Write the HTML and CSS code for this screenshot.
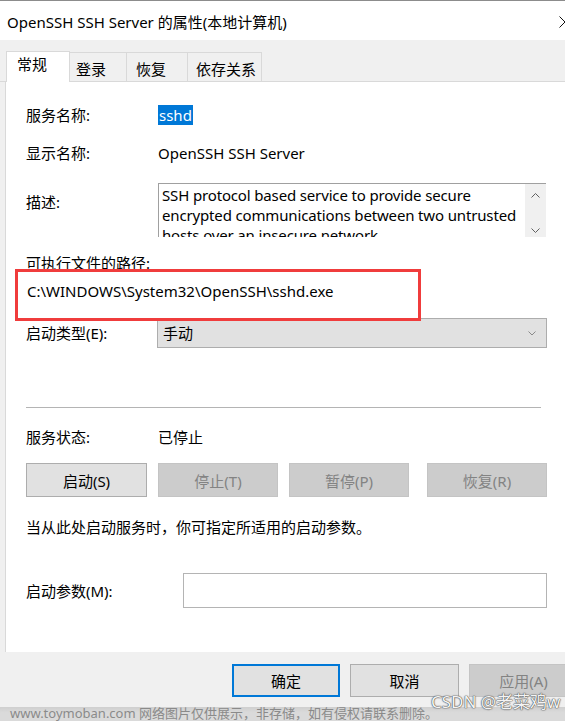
FILE: index.html
```html
<!DOCTYPE html>
<html lang="zh-CN">
<head>
<meta charset="UTF-8" />
<title>OpenSSH SSH Server 的属性(本地计算机)</title>
<link rel="stylesheet" href="styles.css">
</head>
<body>
<div class="window">

  <div class="titlebar">
    <span class="title">OpenSSH SSH Server 的属性(本地计算机)</span>
    <svg class="close" width="12" height="12" viewBox="0 0 12 12"><path d="M0.5 0.5 L11.5 11.5 M11.5 0.5 L0.5 11.5" stroke="#111" stroke-width="1" fill="none"/></svg>
  </div>

  <div class="tabs">
    <div class="tab active">常规</div>
    <div class="tab t-logon">登录</div>
    <div class="tab t-recover">恢复</div>
    <div class="tab t-deps">依存关系</div>
  </div>

  <div class="panel">
    <div class="row r-name">
      <span class="label">服务名称:</span>
      <span><span class="selected">sshd</span></span>
    </div>
    <div class="row r-display">
      <span class="label">显示名称:</span>
      <span>OpenSSH SSH Server</span>
    </div>
    <div class="row r-desc">
      <span class="label">描述:</span>
      <div class="textbox">
        <div class="textbox-text">
          <div>SSH protocol based service to provide secure</div>
          <div>encrypted communications between two untrusted</div>
          <div>hosts over an insecure network.</div>
        </div>
        <div class="scrollbar">
          <svg width="9" height="5" viewBox="0 0 9 5"><path d="M0.5 4.5 L4.5 0.5 L8.5 4.5" stroke="#606060" fill="none"/></svg>
          <svg width="9" height="5" viewBox="0 0 9 5"><path d="M0.5 0.5 L4.5 4.5 L8.5 0.5" stroke="#606060" fill="none"/></svg>
        </div>
      </div>
    </div>
    <div class="path-label">可执行文件的路径:</div>
    <div class="path">C:\WINDOWS\System32\OpenSSH\sshd.exe</div>
    <div class="row r-start">
      <span class="label">启动类型(E):</span>
      <div class="select">
        <span>手动</span>
        <svg width="8" height="5" viewBox="0 0 8 5"><path d="M0.5 0.5 L4 4 L7.5 0.5" stroke="#8a8a8a" fill="none"/></svg>
      </div>
    </div>
    <div class="separator"></div>
    <div class="row r-status">
      <span class="label">服务状态:</span>
      <span>已停止</span>
    </div>
    <div class="service-buttons">
      <div class="btn">启动(S)</div>
      <div class="btn disabled">停止(T)</div>
      <div class="btn disabled">暂停(P)</div>
      <div class="btn disabled last">恢复(R)</div>
    </div>
    <div class="hint">当从此处启动服务时，你可指定所适用的启动参数。</div>
    <div class="row r-params">
      <span class="label">启动参数(M):</span>
      <div class="input"></div>
    </div>

    <div class="highlight-box"></div>
  </div>

  <div class="footer">
    <div class="btn dlg default">确定</div>
    <div class="btn dlg">取消</div>
    <div class="btn dlg disabled">应用(A)</div>
  </div>

  <div class="watermark"><span>www.toymoban.com 网络图片仅供展示，非存储，如有侵权请联系删除。</span></div>
  <div class="csdn">CSDN @老菜鸡w</div>
</div>
</body>
</html>
```

FILE: styles.css
```css
body { margin: 0; background: #f0f0f0; font-family: "Noto Sans", "Noto Sans CJK SC", sans-serif; font-size: 15px; color: #000; }
.window { width: 565px; height: 721px; overflow: hidden; position: relative; background: #f0f0f0; }

/* title bar */
.titlebar { height: 40px; box-sizing: border-box; border-top: 1px solid #8c8c8c; background: #fff; display: flex; align-items: center; justify-content: space-between; padding-left: 7px; }
.title { line-height: 20px; padding-top: 2px; }
.close { margin-right: -6px; margin-top: 2px; flex-shrink: 0; }

/* tabs */
.tabs { height: 42px; box-sizing: border-box; border-bottom: 1px solid #d9d9d9; display: flex; align-items: flex-end; padding-left: 6px; }
.tab { height: 29px; box-sizing: border-box; border: 1px solid #d9d9d9; border-bottom: 0; border-left: 0; padding: 6px 0 0 6px; line-height: 20px; background: #f0f0f0; }
.tab.active { height: 31px; width: 64px; margin-bottom: -1px; padding: 2px 0 0 10px; background: #fff; border-left: 1px solid #d9d9d9; }
.t-logon { width: 57px; }
.t-recover { width: 61px; padding-left: 9px; }
.t-deps { width: 74px; padding-left: 8px; }

/* main panel */
.panel { position: relative; margin-left: 5px; height: 570px; box-sizing: border-box; border-left: 1px solid #d9d9d9; background: #fff; padding: 23px 18px 0 20px; }
.row { display: grid; grid-template-columns: 132px 1fr; align-items: center; line-height: 20px; }
.r-display { margin-top: 18px; }
.r-desc { margin-top: 20px; align-items: start; }
.r-desc .label { padding-top: 9px; }
.selected { background: #0078d7; color: #fff; padding: 0 1px; display: inline-block; }

.textbox { height: 54px; box-sizing: border-box; border-top: 1px solid #a0a0a0; border-left: 1px solid #a0a0a0; display: flex; overflow: hidden; margin-right: 1px; }
.textbox-text { flex: 1; min-width: 0; padding: 1px 0 0 3px; line-height: 20px; white-space: nowrap; letter-spacing: -0.15px; overflow: hidden; }
.scrollbar { width: 21px; flex-shrink: 0; background: #f0f0f0; display: flex; flex-direction: column; justify-content: space-between; align-items: center; padding: 9px 0 4px; box-sizing: border-box; }

.path-label { margin-top: 16px; line-height: 20px; }
.path { margin-top: 8px; line-height: 20px; padding-left: 1px; }

.r-start { margin-top: 17px; }
.select { height: 30px; box-sizing: border-box; border: 1px solid #adadad; background: #e1e1e1; display: flex; align-items: center; justify-content: space-between; padding: 0 10px 0 5px; margin-left: -1px; }

.separator { margin-top: 59px; margin-right: 6px; height: 1px; background: #b4b4b4; }
.r-status { margin-top: 19px; }

.service-buttons { margin-top: 16px; display: flex; gap: 11px; }
.btn { height: 34px; width: 121px; box-sizing: border-box; border: 1px solid #adadad; background: #e1e1e1; display: flex; align-items: center; justify-content: center; }
.btn.disabled { background: #cccccc; border-color: #c4c4c4; color: #838383; }
.service-buttons .btn.disabled { width: 120px; }
.service-buttons .last { margin-left: auto; width: 121px; }

.hint { margin-top: 20px; line-height: 20px; }
.r-params { margin-top: 36px; grid-template-columns: 157px 1fr; }
.input { height: 35px; box-sizing: border-box; border: 1px solid #b4b4b4; background: #fff; }

/* red annotation drawn on top of the screenshot */
.highlight-box { position: absolute; left: 9px; top: 187px; width: 406px; height: 52px; box-sizing: border-box; border: 3px solid #f03c3c; }

/* dialog buttons */
.footer { height: 55px; box-sizing: border-box; padding: 12px 0 0 232px; display: flex; gap: 10px; }
.btn.dlg { width: 109px; height: 33px; flex-shrink: 0; }
.btn.default { border: 2px solid #0078d7; width: 108px; }

/* watermarks */
.watermark { height: 14px; background: linear-gradient(#cfcfcf, #dadada 40%); color: #8a8a8a; font-size: 13px; line-height: 16px; padding-left: 10px; overflow: hidden; }
.watermark span { display: block; margin-top: -2px; white-space: nowrap; }
.csdn { position: absolute; left: 431px; top: 692px; font-size: 17px; line-height: 20px; color: #f4f4f4; text-shadow: 0 0 1px #444, 0 0 1px #444, 0 0 2px #888; white-space: nowrap; }
```
